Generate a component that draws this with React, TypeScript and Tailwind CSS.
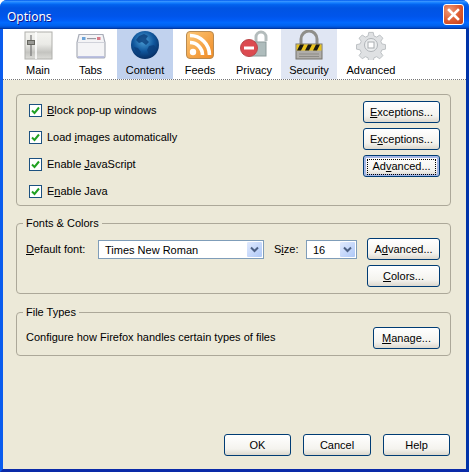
import React from 'react';

const MainIcon = () => (
    <svg width="30" height="30" viewBox="0 0 30 30">
        <defs>
            <linearGradient id="mainFace" x1="0" y1="0" x2="0" y2="1">
                <stop offset="0" stopColor="#f4f4f0" />
                <stop offset="0.45" stopColor="#eaeae6" />
                <stop offset="0.75" stopColor="#c4c4c0" />
                <stop offset="1" stopColor="#dcdcd8" />
            </linearGradient>
        </defs>
        <rect x="2" y="2" width="27" height="27" fill="url(#mainFace)" stroke="#b0b0ac" />
        <line x1="13" y1="2" x2="13" y2="29" stroke="#fff" strokeWidth="1.5" />
        <line x1="8" y1="5" x2="8" y2="26" stroke="#777" strokeWidth="1.2" />
        <rect x="4.500" y="10.500" width="7" height="4" fill="#9a9a96" stroke="#66665f" />
    </svg>
);

const TabsIcon = () => (
    <svg width="30" height="30" viewBox="0 0 30 30">
        <path d="M3 4.5h24l2 8v14a1.5 1.5 0 0 1-1.5 1.5h-25A1.5 1.5 0 0 1 1 26.500v-14z" fill="#f4f4f6" stroke="#a9adb8" strokeWidth="1.2" />
        <path d="M1.500 12.500h27" stroke="#d0d2da" />
        <rect x="6" y="7" width="3.500" height="3" fill="#6ba3d8" />
        <rect x="11" y="8" width="9" height="1.200" fill="#9a9aa2" />
        <rect x="21" y="7" width="3.500" height="3" fill="#d87a88" />
        <path d="M2 27h26" stroke="#aab0d8" strokeWidth="1.500" />
    </svg>
);

const GlobeIcon = () => (
    <svg width="30" height="30" viewBox="0 0 30 30">
        <defs>
            <radialGradient id="globe" cx="0.45" cy="0.35" r="0.75">
                <stop offset="0" stopColor="#4fa3d9" />
                <stop offset="0.5" stopColor="#10569c" />
                <stop offset="1" stopColor="#04204f" />
            </radialGradient>
        </defs>
        <circle cx="15" cy="15" r="14" fill="url(#globe)" />
        <path d="M9 6l5-2 4 2-2 3 3 3-3 3-4-3-3 1-3-3zM19 16l5-1 2 3-3 5-4 1-2-4zM4 17l4 1 3 4-2 3-3-3z" fill="#0b3f7c" opacity="0.8" />
    </svg>
);

const FeedsIcon = () => (
    <svg width="30" height="30" viewBox="0 0 30 30">
        <defs>
            <linearGradient id="feed" x1="0" y1="0" x2="1" y2="1">
                <stop offset="0" stopColor="#fcc878" />
                <stop offset="1" stopColor="#f08a24" />
            </linearGradient>
        </defs>
        <rect x="1.500" y="1.500" width="27" height="27" rx="3.500" fill="url(#feed)" stroke="#b98a50" />
        <circle cx="8" cy="22" r="3.200" fill="#fff" />
        <path d="M5 12.500a12.500 12.500 0 0 1 12.500 12.500" fill="none" stroke="#fff" strokeWidth="3.600" />
        <path d="M5 5.500a19.500 19.500 0 0 1 19.500 19.500" fill="none" stroke="#fff" strokeWidth="3.600" />
    </svg>
);

const PrivacyIcon = () => (
    <svg width="30" height="30" viewBox="0 0 30 30">
        <path d="M17 12V7a5 5 0 0 1 10 0v4" fill="none" stroke="#b4bcbc" strokeWidth="3" />
        <rect x="11" y="12" width="16" height="14" fill="#aebcbc" stroke="#8b9a9a" />
        <circle cx="10" cy="18" r="8.500" fill="#dc4a50" stroke="#b8474a" />
        <rect x="5" y="16.500" width="10" height="3" fill="#fff" />
    </svg>
);

const SecurityIcon = () => (
    <svg width="30" height="30" viewBox="0 0 30 30">
        <path d="M7 14V9a8 8 0 0 1 16 0v5" fill="none" stroke="#8e8e8a" strokeWidth="3" />
        <rect x="2" y="14" width="26" height="15" fill="#b0aeaa" stroke="#77756f" />
        <rect x="2.500" y="14.500" width="25" height="6" fill="#e8c21e" />
        <path d="M6 14.500h4l-3 6h-4zM14 14.500h4l-3 6h-4zM22 14.500h4l-3 6h-4z" fill="#1a1a14" />
        <path d="M5 24h20M5 26.500h20" stroke="#8d8b86" />
    </svg>
);

const GearIcon = () => (
    <svg width="30" height="30" viewBox="0 0 30 30">
        <path
            d="M12.500 1h5l.8 4 3 1.200 3.400-2.300 3.500 3.500-2.300 3.400 1.200 3 4 .8v5l-4 .8-1.200 3 2.300 3.400-3.500 3.500-3.400-2.300-3 1.200-.8 4h-5l-.8-4-3-1.200-3.400 2.300-3.500-3.500 2.300-3.400-1.200-3-4-.8v-5l4-.8 1.200-3-2.300-3.400 3.500-3.500 3.400 2.300 3-1.200z"
            transform="translate(1.500 1.500) scale(0.9)"
            fill="#dfe1e3"
            stroke="#b8bcc0"
        />
        <circle cx="15" cy="15" r="6.500" fill="#eceeef" stroke="#b0b4b8" />
        <rect x="12" y="12" width="6" height="6" fill="#fff" stroke="#a8acb0" />
    </svg>
);

const tabs = [
    { label: 'Main', icon: <MainIcon />, width: 'w-[52px]', bg: '' },
    { label: 'Tabs', icon: <TabsIcon />, width: 'w-[53px]', bg: '' },
    { label: 'Content', icon: <GlobeIcon />, width: 'w-[56px]', bg: 'bg-[#c1d2ee]' },
    { label: 'Feeds', icon: <FeedsIcon />, width: 'w-[54px]', bg: '' },
    { label: 'Privacy', icon: <PrivacyIcon />, width: 'w-[54px]', bg: '' },
    { label: 'Security', icon: <SecurityIcon />, width: 'w-[56px]', bg: 'bg-[#e0e6f3]' },
    { label: 'Advanced', icon: <GearIcon />, width: 'w-[68px]', bg: '' },
];

const Button: React.FC<{ className: string; focused?: boolean; children: React.ReactNode }> = ({ className, focused, children }) => (
    <button
        className={`${className} h-[22px] shrink-0 pt-px rounded-[3px] border border-[#003c74] bg-[linear-gradient(180deg,#ffffff_0%,#f4f3ee_70%,#dcd8ce_100%)] flex items-center justify-center text-black ${
            focused ? 'shadow-[inset_0_0_0_2px_#a6b8e6]' : ''
        }`}
    >
        {focused ? (
            <span className="w-full mx-[3px] h-[16px] border border-dotted border-black flex items-center justify-center">{children}</span>
        ) : (
            children
        )}
    </button>
);

const Check: React.FC<{ children: React.ReactNode }> = ({ children }) => (
    <div className="h-5 flex items-center gap-[5px]">
        <span className="w-[13px] h-[13px] border border-[#1c5180] bg-white flex items-center justify-center">
            <svg width="9" height="9" viewBox="0 0 9 9">
                <path d="M1 4.500l2.500 2.500 4.500-5.500" fill="none" stroke="#21a121" strokeWidth="2" />
            </svg>
        </span>
        <span className="pt-px">{children}</span>
    </div>
);

const Select: React.FC<{ className: string; value: string }> = ({ className, value }) => (
    <div className={`${className} h-[19px] mt-[2px] border border-[#7f9db9] bg-white flex items-center justify-between`}>
        <span className="pl-[6px] pt-px">{value}</span>
        <span className="w-[15px] h-[15px] mr-px rounded-[1px] bg-[linear-gradient(135deg,#e1eafe_0%,#aec8f7_100%)] flex items-center justify-center">
            <svg width="9" height="7" viewBox="0 0 9 7">
                <path d="M1 1.500l3.500 3.500 3.500-3.500" fill="none" stroke="#4d6185" strokeWidth="2" />
            </svg>
        </span>
    </div>
);

export default function App() {
    return (
        <div className="w-[469px] h-[472px] flex flex-col rounded-t-[7px] overflow-hidden bg-[#0054e3] font-['Liberation_Sans',sans-serif] text-[11px] text-black">
            <div className="h-[29px] shrink-0 flex items-center justify-between pl-[7px] pr-[5px] bg-[linear-gradient(180deg,#0058ee_0%,#3593ff_5%,#127dff_10%,#0262ee_16%,#0054e3_28%,#0055eb_56%,#005bf5_68%,#026afe_78%,#0062ef_88%,#0052d6_94%,#003092_100%)]">
                <span className="pt-[4px] text-white text-[12px] font-['Noto_Sans',sans-serif] [text-shadow:1px_1px_#0f1089]">Options</span>
                <span className="w-[21px] h-[21px] rounded-[3px] border border-white bg-[radial-gradient(circle_at_30%_30%,#ef9a78_0%,#dc5a30_55%,#c23c18_100%)] flex items-center justify-center">
                    <svg width="13" height="13" viewBox="0 0 13 13">
                        <path d="M2 2l9 9M11 2l-9 9" stroke="#fff" strokeWidth="2.600" strokeLinecap="square" />
                    </svg>
                </span>
            </div>

            <div className="flex-1 flex flex-col min-h-0 border-l-[3px] border-l-[#0a5cee] border-r-[3px] border-r-[#0033a8] border-b-[3px] border-b-[#0a2aa8] bg-[#ece9d8]">
                <div className="h-[51px] shrink-0 flex pl-[9px] bg-white border-b border-dotted border-[#777]">
                    {tabs.map((tab) => (
                        <div key={tab.label} className={`${tab.width} ${tab.bg} flex flex-col items-center pt-px`}>
                            {tab.icon}
                            <span className="mt-[3px] leading-[14px]">{tab.label}</span>
                        </div>
                    ))}
                </div>

                <div className="flex-1 flex flex-col pl-[13px] pr-[15px]">
                    <fieldset className="mt-[14px] border border-[#aca899] rounded-[4px] pl-[12px] pr-[10px] pt-[5px] pb-[4px] flex justify-between">
                        <div className="flex flex-col gap-[7px]">
                            <Check><span className="underline">B</span>lock pop-up windows</Check>
                            <Check>Load <span className="underline">i</span>mages automatically</Check>
                            <Check>Enable <span className="underline">J</span>avaScript</Check>
                            <Check>E<span className="underline">n</span>able Java</Check>
                        </div>
                        <div className="mt-px flex flex-col gap-[5px]">
                            <Button className="w-[77px]"><span className="underline">E</span>xceptions...</Button>
                            <Button className="w-[77px]">E<span className="underline">x</span>ceptions...</Button>
                            <Button className="w-[77px]" focused>Ad<span className="underline">v</span>anced...</Button>
                        </div>
                    </fieldset>

                    <fieldset className="mt-[10px] border border-[#aca899] rounded-[4px] px-[9px] pr-[10px] pt-[8px] pb-[6px] flex items-start">
                        <legend className="-ml-[3px] px-[3px] leading-[14px]">Fonts &amp; Colors</legend>
                        <span className="w-[72px] shrink-0 mt-[4px] leading-[14px]"><span className="underline">D</span>efault font:</span>
                        <Select className="w-[166px]" value="Times New Roman" />
                        <span className="ml-[10px] w-[32px] shrink-0 mt-[4px] leading-[14px]">S<span className="underline">i</span>ze:</span>
                        <Select className="w-[51px]" value="16" />
                        <div className="ml-auto flex flex-col gap-[5px]">
                            <Button className="w-[73px]">A<span className="underline">d</span>vanced...</Button>
                            <Button className="w-[73px]"><span className="underline">C</span>olors...</Button>
                        </div>
                    </fieldset>

                    <fieldset className="mt-[11px] border border-[#aca899] rounded-[4px] px-[9px] pr-[10px] pt-[8px] pb-[6px] flex items-center justify-between">
                        <legend className="-ml-[3px] px-[3px] leading-[14px]">File Types</legend>
                        <span className="-mt-[1px]">Configure how Firefox handles certain types of files</span>
                        <Button className="w-[67px]"><span className="underline">M</span>anage...</Button>
                    </fieldset>

                    <div className="mt-auto mb-[13px] mr-px flex justify-end gap-[12px]">
                        <Button className="w-[67px]">OK</Button>
                        <Button className="w-[68px]">Cancel</Button>
                        <Button className="w-[67px]">Help</Button>
                    </div>
                </div>
            </div>
        </div>
    );
}
